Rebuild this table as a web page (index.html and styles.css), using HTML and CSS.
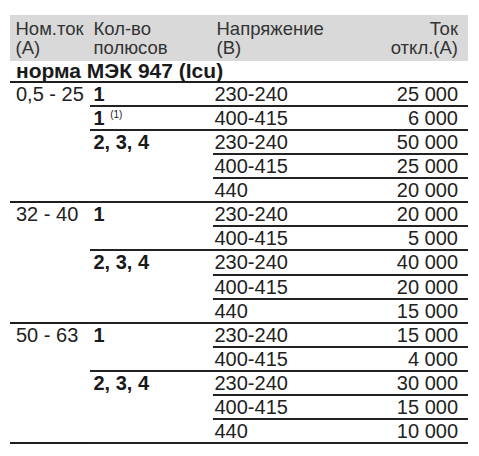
FILE: index.html
```html
<!DOCTYPE html>
<html lang="ru">
<head>
<meta charset="utf-8">
<title>Токи отключения</title>
<link rel="stylesheet" href="styles.css">
</head>
<body>
<div class="page">
  <div class="head">
    <div class="h1">Ном.ток<br>(А)</div>
    <div class="h2">Кол-во<br>полюсов</div>
    <div class="h3">Напряжение<br>(В)</div>
    <div class="h4">Ток<br>откл.(А)</div>
  </div>
  <div class="table">
    <div class="norm">норма МЭК 947 (Icu)</div>

    <div class="c1 s5">0,5 - 25</div>
    <div class="c2">1</div>
    <div class="c3">230-240</div><div class="c4">25 000</div>
    <div class="c2">1 <sup class="note">(1)</sup></div>
    <div class="c3">400-415</div><div class="c4">6 000</div>
    <div class="c2 s3">2, 3, 4</div>
    <div class="c3">230-240</div><div class="c4">50 000</div>
    <div class="c3">400-415</div><div class="c4">25 000</div>
    <div class="c3">440</div><div class="c4">20 000</div>

    <div class="c1 s5">32 - 40</div>
    <div class="c2 s2">1</div>
    <div class="c3">230-240</div><div class="c4">20 000</div>
    <div class="c3">400-415</div><div class="c4">5 000</div>
    <div class="c2 s3">2, 3, 4</div>
    <div class="c3">230-240</div><div class="c4">40 000</div>
    <div class="c3">400-415</div><div class="c4">20 000</div>
    <div class="c3">440</div><div class="c4">15 000</div>

    <div class="c1 s5">50 - 63</div>
    <div class="c2 s2">1</div>
    <div class="c3">230-240</div><div class="c4">15 000</div>
    <div class="c3">400-415</div><div class="c4">4 000</div>
    <div class="c2 s3">2, 3, 4</div>
    <div class="c3">230-240</div><div class="c4">30 000</div>
    <div class="c3">400-415</div><div class="c4">15 000</div>
    <div class="c3">440</div><div class="c4">10 000</div>
  </div>
</div>
</body>
</html>
```

FILE: styles.css
```css
html, body {
  margin: 0;
  padding: 0;
  background: #ffffff;
}

body {
  font-family: "Liberation Sans", Arial, sans-serif;
  color: #222222;
}

.page {
  padding-top: 15px;
  padding-left: 10px;
  width: 458px;
}

.head {
  display: grid;
  grid-template-columns: 80px 123px 120px 135px;
  height: 46px;
  box-sizing: border-box;
  padding-top: 3.5px;
  background: #d9d9d9;
  font-size: 18.5px;
  line-height: 19px;
  color: #333333;
}

.h1 { padding-left: 5.5px; }
.h2 { padding-left: 3.5px; }
.h3 { padding-left: 3.5px; }
.h4 { text-align: right; padding-right: 10px; }

.table {
  display: grid;
  grid-template-columns: 80px 123px 120px 135px;
  grid-template-rows: 21.5px;
  grid-auto-rows: 24.13px;
  font-size: 20px;
}

.norm {
  grid-column: 1 / -1;
  grid-row: 1;
  box-sizing: border-box;
  line-height: 19.5px;
  padding-left: 6px;
  font-size: 21px;
  font-weight: bold;
  color: #1a1a1a;
  border-bottom: 2px solid #1e1e1e;
}

.c1, .c2, .c3, .c4 {
  box-sizing: border-box;
  line-height: 22.13px;
  border-bottom: 2px solid #222222;
  white-space: nowrap;
}

.c1 { grid-column: 1; padding-left: 6px; border-bottom-color: #1e1e1e; }
.c2 { grid-column: 2; padding-left: 3.5px; font-weight: bold; color: #1a1a1a; }
.c3 { grid-column: 3; padding-left: 1.5px; }
.c4 { grid-column: 4; text-align: right; padding-right: 10px; }

.s2 { grid-row: span 2; }
.s3 { grid-row: span 3; }
.s5 { grid-row: span 5; }

.note {
  font-size: 10px;
  font-weight: normal;
  vertical-align: 7px;
  line-height: 0;
}
```
